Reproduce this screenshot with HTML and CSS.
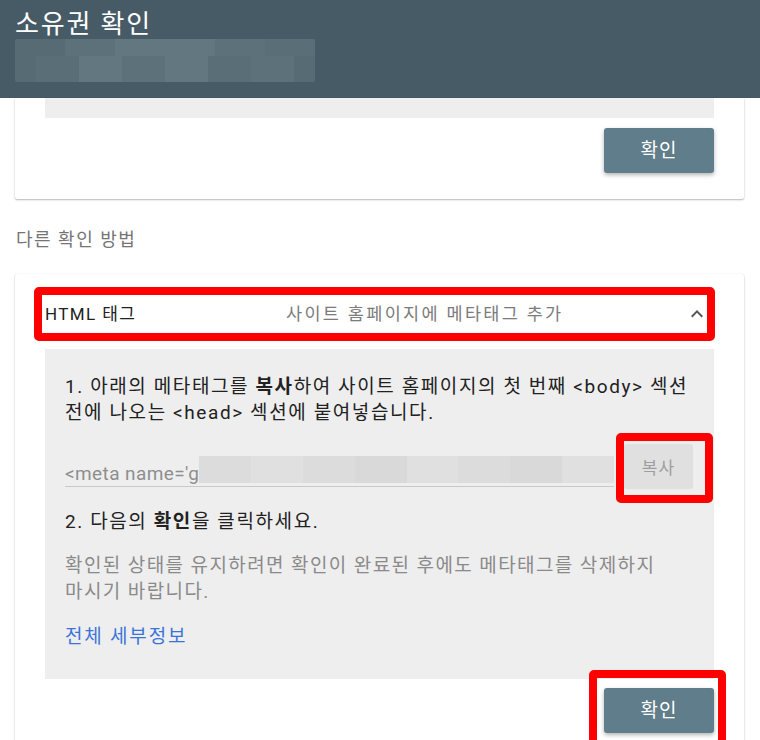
FILE: index.html
```html
<!DOCTYPE html>
<html lang="ko">
<head>
<meta charset="utf-8">
<title>소유권 확인</title>
<link rel="stylesheet" href="styles.css">
</head>
<body>
<header class="topbar">
  <h1 class="title">소유권 확인</h1>
  <div class="blur">
    <div class="blur-row">
      <span class="b b1"></span><span class="b b2"></span><span class="b b3 w2"></span><span class="b b2"></span><span class="b b4"></span>
    </div>
    <div class="blur-row">
      <span class="b b1 half"></span><span class="b b4"></span><span class="b b3"></span><span class="b b2"></span><span class="b b3"></span><span class="b b4"></span><span class="b b2"></span><span class="b b1 end"></span>
    </div>
  </div>
</header>

<main class="content">
  <section class="card card-top">
    <div class="panel-strip"></div>
    <div class="actions">
      <button class="btn-primary">확인</button>
    </div>
  </section>

  <p class="section-label">다른 확인 방법</p>

  <section class="card card-method">
    <div class="method-head">
      <span class="method-name">HTML 태그</span>
      <span class="method-desc">사이트 홈페이지에 메타태그 추가</span>
      <svg class="chevron" viewBox="0 0 24 24" width="24" height="24"><path d="M12 8l-6 6 1.41 1.41L12 10.83l4.59 4.58L18 14z"/></svg>
      <span class="mark mark-head"></span>
    </div>

    <div class="panel">
      <p class="step">1. 아래의 메타태그를 <b>복사</b>하여 사이트 홈페이지의 첫 번째 &lt;body&gt; 섹션 전에 나오는 &lt;head&gt; 섹션에 붙여넣습니다.</p>
      <div class="meta-row">
        <div class="meta-field">
          <span class="meta-text">&lt;meta name='g</span>
          <div class="meta-blur">
            <span class="m m1"></span><span class="m m2"></span><span class="m m1"></span><span class="m m3"></span><span class="m m2"></span><span class="m m1"></span><span class="m m3"></span><span class="m m2"></span>
          </div>
        </div>
        <div class="copy-wrap">
          <button class="btn-copy">복사</button>
          <span class="mark mark-copy"></span>
        </div>
      </div>
      <p class="step step2">2. 다음의 <b>확인</b>을 클릭하세요.</p>
      <p class="note">확인된 상태를 유지하려면 확인이 완료된 후에도 메타태그를 삭제하지 마시기 바랍니다.</p>
      <a class="link" href="#">전체 세부정보</a>
    </div>

    <div class="actions actions-bottom">
      <div class="confirm-wrap">
        <button class="btn-primary">확인</button>
        <span class="mark mark-confirm"></span>
      </div>
    </div>
  </section>
</main>
</body>
</html>
```

FILE: styles.css
```css
* { box-sizing: border-box; }

html, body {
  margin: 0;
  padding: 0;
  background: #ffffff;
  font-family: Roboto, "Noto Sans CJK KR", "Noto Sans", sans-serif;
  color: #212121;
  overflow: hidden;
  word-break: keep-all;
}

.topbar {
  background: #475b67;
  height: 98px;
  padding: 10px 0 0 15px;
}

.title {
  margin: 0;
  font-size: 26px;
  line-height: 29px;
  font-weight: 400;
  letter-spacing: 1.8px;
  color: #ffffff;
}

.blur {
  width: 300px;
  height: 43px;
  display: flex;
  flex-direction: column;
  border-radius: 2px;
  overflow: hidden;
}

.blur-row {
  display: flex;
  height: 17px;
}

.blur-row + .blur-row {
  height: 26px;
}

.b { display: block; width: 50px; height: 100%; }
.b.w2 { width: 100px; }
.b.half { width: 25px; }
.b.end { width: 25px; }
.b1 { background: #576b75; }
.b2 { background: #5d717b; }
.b3 { background: #637780; }
.b4 { background: #5a6e78; }

.content {
  padding: 0 16px 0 15px;
}

.card {
  background: #ffffff;
  box-shadow: 0 1px 2px rgba(0, 0, 0, 0.28), 0 0 1px rgba(0, 0, 0, 0.12);
  border-radius: 0 0 2px 2px;
  padding: 0 30px;
}

.card-top {
  padding-bottom: 26px;
}

.panel-strip {
  height: 20px;
  background: #eeeeee;
}

.actions {
  display: flex;
  justify-content: flex-end;
  margin-top: 10px;
}

.btn-primary {
  width: 110px;
  height: 45px;
  border: none;
  border-radius: 3px;
  background: #607d8b;
  color: #ffffff;
  font-family: Roboto, "Noto Sans CJK KR", sans-serif;
  font-size: 19px;
  letter-spacing: 1px;
  line-height: 24px;
  box-shadow: 0 2px 4px rgba(0, 0, 0, 0.3);
  padding: 0;
}

.section-label {
  margin: 28px 0 21px 1px;
  font-size: 18px;
  letter-spacing: 1.5px;
  line-height: 26px;
  color: #757575;
}

.card-method {
  border-radius: 2px 2px 0 0;
  padding-top: 20px;
  padding-bottom: 20px;
}

.method-head {
  position: relative;
  height: 40px;
  display: flex;
  align-items: center;
  line-height: 24px;
}

.method-name {
  width: 241px;
  flex: none;
  font-size: 17px;
  letter-spacing: 1.4px;
  color: #212121;
}

.method-desc {
  flex: 1;
  font-size: 17.5px;
  letter-spacing: 2.3px;
  color: #7b7b7b;
}

.chevron {
  flex: none;
  fill: #555555;
  margin-right: 5px;
}

.mark {
  position: absolute;
  border: 8px solid #ff0000;
  border-radius: 5px;
  pointer-events: none;
}

.mark-head {
  left: -11px;
  right: -1px;
  top: -7px;
  bottom: -7px;
}

.panel {
  margin-top: 15px;
  background: #eeeeee;
  padding: 25px 20px 29px 20px;
}

.step {
  margin: 0;
  font-size: 19px;
  letter-spacing: 1.6px;
  line-height: 26px;
  color: #212121;
}

.step b { font-weight: 700; }

.meta-row {
  display: flex;
  margin-top: 18px;
}

.meta-field {
  position: relative;
  flex: 1;
  height: 43px;
  padding-top: 18px;
  border-bottom: 1px solid #c9c9c9;
  overflow: hidden;
}

.meta-text {
  display: block;
  font-size: 19px;
  letter-spacing: 0.4px;
  line-height: 24px;
  color: #8e8e8e;
  white-space: nowrap;
}

.meta-blur {
  position: absolute;
  left: 134px;
  right: 0;
  top: 12px;
  height: 27px;
  display: flex;
}

.m { flex: 1; height: 100%; }
.m1 { background: #dcdcdc; }
.m2 { background: #e0e0e0; }
.m3 { background: #d9d9d9; }

.copy-wrap {
  position: relative;
  margin-left: 10px;
  margin-right: 1px;
}

.btn-copy {
  display: block;
  width: 69px;
  height: 45px;
  border: none;
  border-radius: 3px;
  background: #e0e0e0;
  color: #9e9e9e;
  font-family: Roboto, "Noto Sans CJK KR", sans-serif;
  font-size: 17px;
  letter-spacing: 1px;
  padding: 0;
}

.mark-copy {
  left: -8px;
  right: -20px;
  top: -11px;
  bottom: -14px;
}

.step2 {
  margin-top: 20px;
}

.note {
  margin: 18px 0 0 0;
  font-size: 19px;
  letter-spacing: 1.4px;
  line-height: 26px;
  color: #8a8a8a;
}

.link {
  display: block;
  margin-top: 19px;
  font-size: 19px;
  letter-spacing: 1.8px;
  line-height: 26px;
  color: #3b74d9;
  text-decoration: none;
}

.actions-bottom {
  margin-top: 9px;
}

.confirm-wrap {
  position: relative;
}

.confirm-wrap .btn-primary {
  display: block;
}

.mark-confirm {
  left: -15px;
  right: -12px;
  top: -18px;
  bottom: -18px;
}
```
